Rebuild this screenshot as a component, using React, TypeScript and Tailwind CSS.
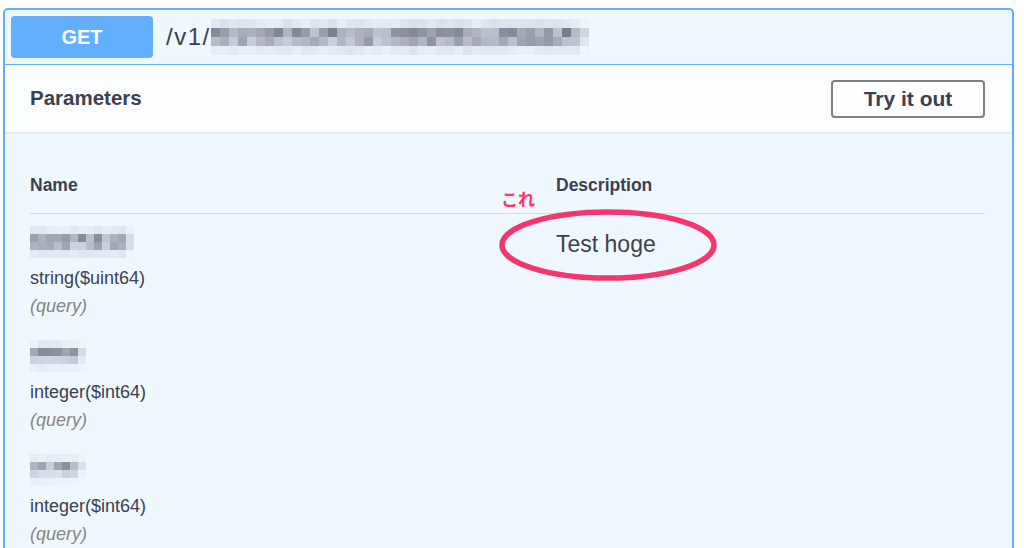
import React from 'react'

const font = { fontFamily: '"Liberation Sans", Arial, sans-serif' }

// pixelated (redacted) text block
function Mosaic({ cols, rows, seed, cell = 9, weights }: { cols: number; rows: number; seed: number; cell?: number; weights: number[] }) {
  const rects: React.ReactElement[] = []
  let s = seed
  const rnd = () => {
    s = (s * 9301 + 49297) % 233280
    return s / 233280
  }
  for (let r = 0; r < rows; r++) {
    for (let c = 0; c < cols; c++) {
      const edge = c === cols - 1 ? 0.3 : 1
      const t = Math.min(1, weights[r] * (0.45 + rnd() * 0.8) * edge)
      const R = Math.round(239 - t * (239 - 120))
      const G = Math.round(247 - t * (247 - 123))
      const B = Math.round(255 - t * (255 - 138))
      rects.push(<rect key={r + '-' + c} x={c * cell} y={r * cell} width={cell} height={cell} fill={`rgb(${R},${G},${B})`} />)
    }
  }
  return (
    <svg width={cols * cell} height={rows * cell} className="block">
      {rects}
    </svg>
  )
}

const params = [
  { type: 'string($uint64)', cols: 13, seed: 11, w: [0.12, 0.8, 0.6, 0.12] },
  { type: 'integer($int64)', cols: 7, seed: 47, w: [0.1, 0.85, 0.35, 0.08] },
  { type: 'integer($int64)', cols: 7, seed: 83, w: [0.1, 0.7, 0.28, 0.05] },
]

export default function App() {
  return (
    <div className="relative w-[1024px] h-[548px] overflow-hidden bg-white pt-[8px] pl-[3px] text-[#3b4151]" style={font}>
      <div className="w-[1011px] border-2 border-b-0 border-[#61affe] rounded-t-[5px] bg-[#eff7ff] h-[600px]">
        {/* summary */}
        <div className="h-[55px] flex items-center pl-[6px] border-b border-[#61affe]">
          <div className="w-[142px] h-[42px] rounded-[4px] bg-[#61affe] text-white font-bold text-[20px] flex items-center justify-center">
            GET
          </div>
          <div className="ml-[13px] flex items-center">
            <span className="text-[24px] tracking-[1.5px] text-[#3b4151]">/v1/</span>
            <Mosaic cols={42} rows={4} seed={5} weights={[0.15, 0.8, 0.65, 0.12]} />
          </div>
        </div>

        {/* parameters header */}
        <div className="h-[67px] bg-[#fbfdff] shadow-[0_1px_2px_rgba(0,0,0,0.1)] flex items-center justify-between pl-[25px] pr-[27px]">
          <h4 className="text-[20.5px] font-bold">Parameters</h4>
          <button className="w-[154px] h-[38px] border-2 border-[#808080] rounded-[4px] text-[21px] font-bold text-[#3b4151] bg-white/40">
            Try it out
          </button>
        </div>

        {/* table */}
        <div className="pl-[25px] pr-[27px]">
          <div className="flex border-b border-[#d5dce6] pt-[41px] pb-[16px] text-[17.5px] font-bold leading-[24px]">
            <div className="w-[526px]">Name</div>
            <div>Description</div>
          </div>
          {params.map((p, i) => (
            <div key={i} className="flex pt-[12px] pb-[8px]">
              <div className="w-[526px]">
                <Mosaic cols={p.cols} rows={4} seed={p.seed} cell={8} weights={p.w} />
                <div className="mt-[6px] h-[28px] leading-[28px] text-[18px]">{p.type}</div>
                <div className="h-[28px] leading-[28px] text-[18px] italic text-[#868686]">(query)</div>
              </div>
              <div>
                {i === 0 && <div className="leading-[36px] text-[23px]">Test hoge</div>}
              </div>
            </div>
          ))}
        </div>
      </div>

      {/* annotation */}
      <div
        className="absolute left-[501px] top-[187px] text-[17px] font-bold text-[#f5356d] leading-[24px]"
        style={{ fontFamily: '"Noto Sans CJK JP", sans-serif', textShadow: '0 0 2px #fff, 0 0 2px #fff, 1px 1px 2px rgba(0,0,0,0.15)' }}
      >
        これ
      </div>
      <svg className="absolute left-[497px] top-[206px]" width="222" height="80">
        <ellipse cx="111" cy="39" rx="106" ry="33" fill="none" stroke="#f5356d" strokeWidth="5.5" />
      </svg>
    </div>
  )
}
